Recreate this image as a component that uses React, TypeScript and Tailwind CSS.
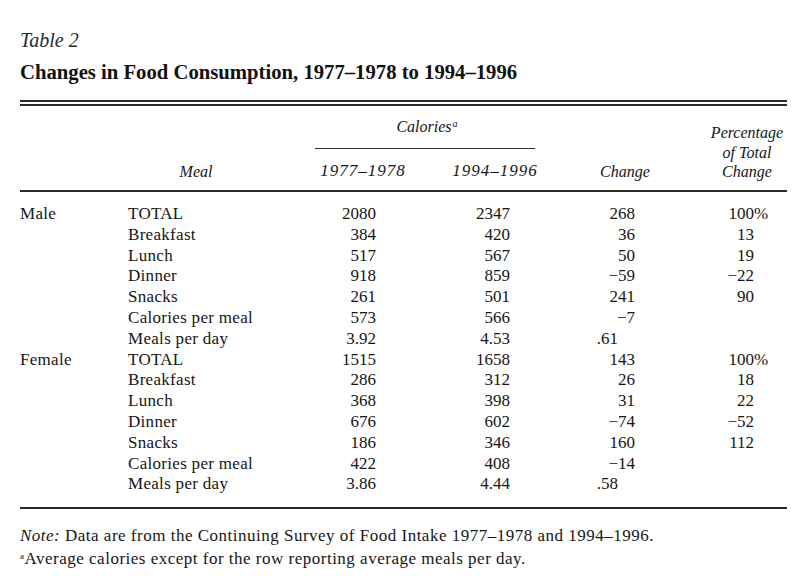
import React from "react";

type Row = { g?: string; m: string; a: string; b: string; c: string; p?: string; pct?: boolean };

const rows: Row[] = [
  { g: "Male", m: "TOTAL", a: "2080", b: "2347", c: "268", p: "100", pct: true },
  { m: "Breakfast", a: "384", b: "420", c: "36", p: "13" },
  { m: "Lunch", a: "517", b: "567", c: "50", p: "19" },
  { m: "Dinner", a: "918", b: "859", c: "\u221259", p: "\u221222" },
  { m: "Snacks", a: "261", b: "501", c: "241", p: "90" },
  { m: "Calories per meal", a: "573", b: "566", c: "\u22127" },
  { m: "Meals per day", a: "3.92", b: "4.53", c: ".61" },
  { g: "Female", m: "TOTAL", a: "1515", b: "1658", c: "143", p: "100", pct: true },
  { m: "Breakfast", a: "286", b: "312", c: "26", p: "18" },
  { m: "Lunch", a: "368", b: "398", c: "31", p: "22" },
  { m: "Dinner", a: "676", b: "602", c: "\u221274", p: "\u221252" },
  { m: "Snacks", a: "186", b: "346", c: "160", p: "112" },
  { m: "Calories per meal", a: "422", b: "408", c: "\u221214" },
  { m: "Meals per day", a: "3.86", b: "4.44", c: ".58" },
];

export default function App() {
  return (
    <div className="w-[800px] h-[576px] overflow-hidden bg-white text-[#161616] font-['Liberation_Serif','Times_New_Roman',serif]">
      <div className="pl-[20px] pr-[13px] pt-[28px]">
        <div className="italic text-[20px] leading-[24px] text-[#2a2a2a]">Table 2</div>
        <div className="mt-[4px] font-bold text-[20.7px] leading-[32px] text-[#111]">
          Changes in Food Consumption, 1977–1978 to 1994–1996
        </div>
        <div className="mt-[12px] h-[6px] border-y-2 border-[#2a2a2a]" />

        {/* header */}
        <div className="grid grid-cols-[108px_182px_110px_140px_130px_97px] pt-[17px] pb-[8px] italic text-[16px]">
          <div className="row-span-2" />
          <div className="row-span-2 self-end text-center pr-[46px] leading-[20px]">Meal</div>
          <div className="col-span-2 -mt-[6px] ml-[5px] mr-[25px] pb-[10px] border-b-[1.5px] border-[#333] text-center leading-[20px] pl-[4px]">
            Calories<sup className="text-[10px] ml-[1px]">a</sup>
          </div>
          <div className="row-span-2 self-end text-center leading-[20px]">Change</div>
          <div className="row-span-2 self-end text-center pl-[17px] leading-[19.5px]">
            <div>Percentage</div>
            <div>of Total</div>
            <div>Change</div>
          </div>
          <div className="mt-[12px] text-center pr-[4px] text-[17px] leading-[20px] tracking-[1px]">1977–1978</div>
          <div className="mt-[12px] text-center pl-[10px] text-[17px] leading-[20px] tracking-[1px]">1994–1996</div>
        </div>
        <div className="border-t-2 border-[#2a2a2a]" />

        {/* body */}
        <div className="grid grid-cols-[108px_182px_110px_140px_130px_97px] auto-rows-[20.8px] pt-[12.5px] pb-[12px] text-[17px] leading-[20.8px]">
          {rows.map((r, i) => (
            <React.Fragment key={i}>
              <div className="tracking-[0.3px]">{r.g ?? ""}</div>
              <div className="tracking-[0.3px]">{r.m}</div>
              <div className="text-right pr-[44px]">{r.a}</div>
              <div className="text-right pr-[50px]">{r.b}</div>
              <div className={r.c.startsWith(".") ? "text-right pr-[72px]" : "text-right pr-[55px]"}>{r.c}</div>
              <div className="text-right pr-[33px]">
                {r.p ? (
                  <span className="relative">
                    {r.p}
                    {r.pct ? <span className="absolute left-full top-0">%</span> : null}
                  </span>
                ) : null}
              </div>
            </React.Fragment>
          ))}
        </div>
        <div className="border-t-2 border-[#2a2a2a]" />

        {/* notes */}
        <div className="mt-[14.5px] text-[17px] leading-[23px] tracking-[0.5px]">
          <div>
            <span className="italic">Note:</span> Data are from the Continuing Survey of Food Intake 1977–1978 and 1994–1996.
          </div>
          <div>
            <sup className="text-[9px]">a</sup>Average calories except for the row reporting average meals per day.
          </div>
        </div>
      </div>
    </div>
  );
}
